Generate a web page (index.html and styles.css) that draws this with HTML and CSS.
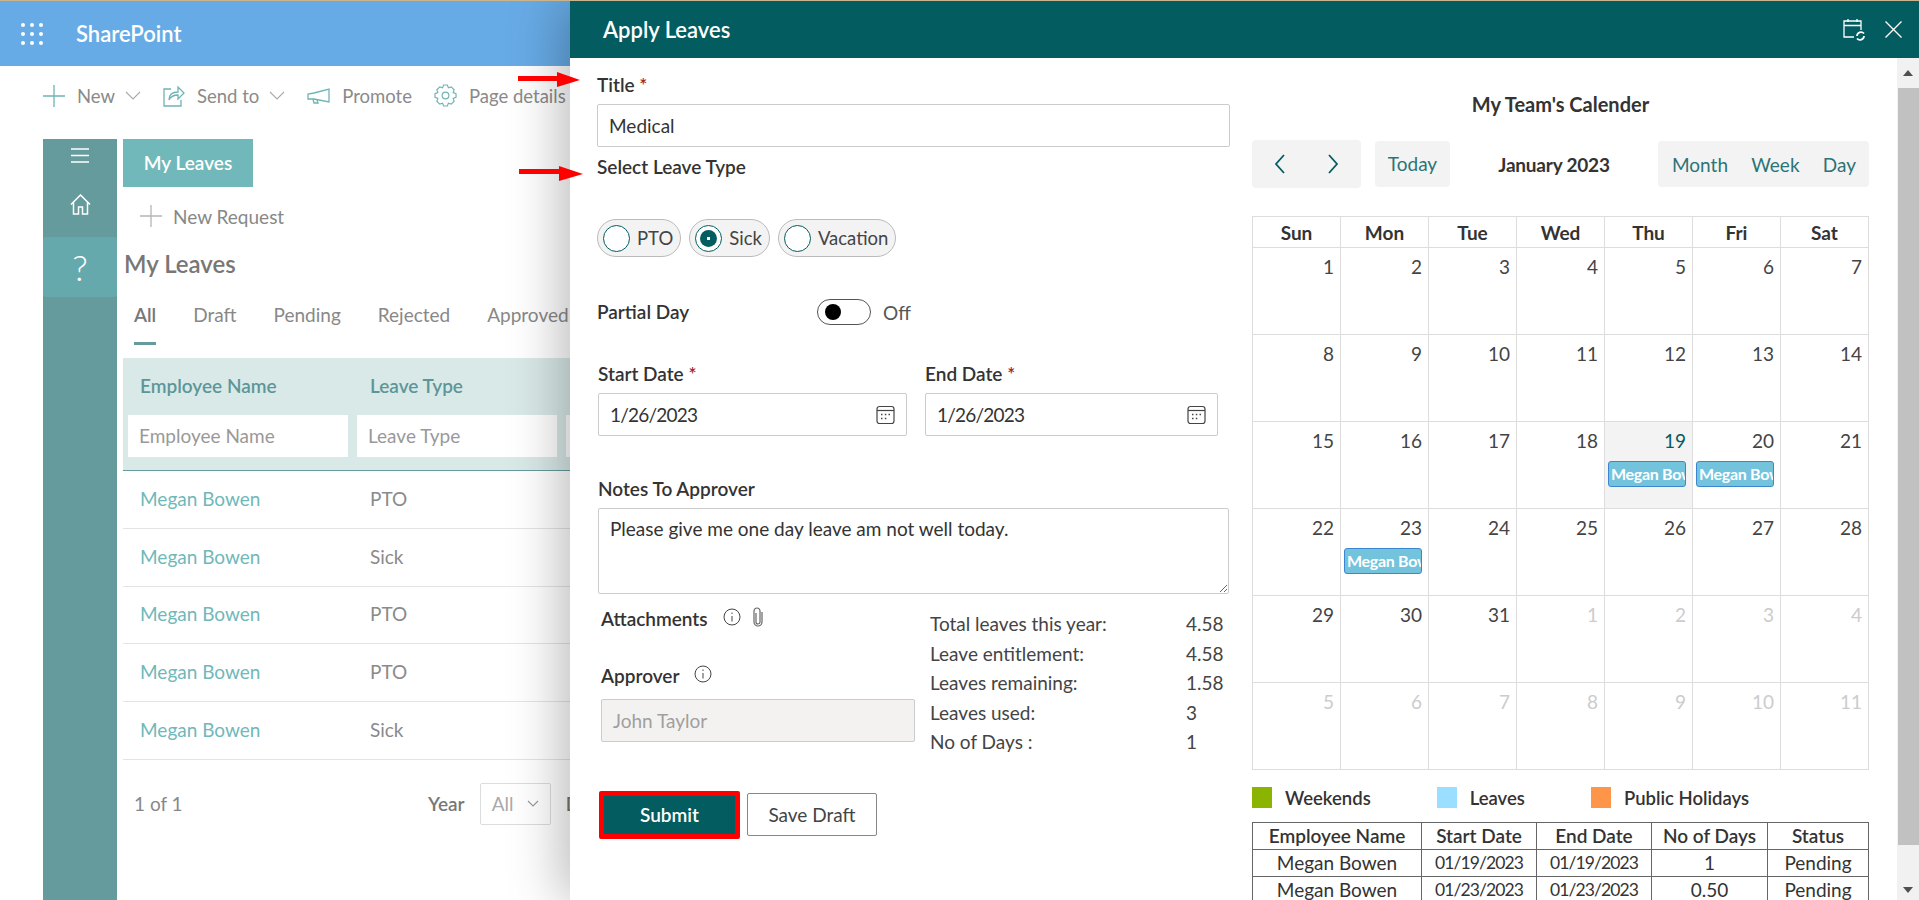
FILE: index.html
```html
<!DOCTYPE html>
<html lang="en">
<head>
  <meta charset="UTF-8">
  <title>Apply Leaves</title>
  <link rel="stylesheet" href="styles.css">
</head>

<body>
  <!-- sharepoint page behind the panel -->
  <header class="suite-bar">
    <svg class="waffle" width="22" height="22" viewBox="0 0 22 22" fill="#fff">
      <circle cx="2" cy="2" r="2"/><circle cx="11" cy="2" r="2"/><circle cx="20" cy="2" r="2"/>
      <circle cx="2" cy="11" r="2"/><circle cx="11" cy="11" r="2"/><circle cx="20" cy="11" r="2"/>
      <circle cx="2" cy="20" r="2"/><circle cx="11" cy="20" r="2"/><circle cx="20" cy="20" r="2"/>
    </svg>
    <span class="suite-name">SharePoint</span>
  </header>

  <div class="command-bar">
    <svg class="cmd-icon" width="22" height="22" viewBox="0 0 22 22" fill="none" stroke="#6fb3b5" stroke-width="1.3"><path d="M11 0v22M0 11h22"/></svg>
    <span class="cmd-text">New</span>
    <svg class="cmd-chevron" width="16" height="9" viewBox="0 0 16 9" fill="none" stroke="#aaa" stroke-width="1.1"><path d="M1 1l7 7 7-7"/></svg>
    <svg class="cmd-icon cmd-gap" width="22" height="22" viewBox="0 0 22 22" fill="none" stroke="#6fb3b5" stroke-width="1.3"><path d="M8 4H1v17h17v-6"/><path d="M6 15c0-6 4-8 9-8V2l6 6-6 6V10c-4 0-7 1-9 5z"/></svg>
    <span class="cmd-text">Send to</span>
    <svg class="cmd-chevron" width="16" height="9" viewBox="0 0 16 9" fill="none" stroke="#aaa" stroke-width="1.1"><path d="M1 1l7 7 7-7"/></svg>
    <svg class="cmd-icon cmd-gap" width="23" height="16" viewBox="0 0 23 16" fill="none" stroke="#6fb3b5" stroke-width="1.3"><path d="M22 1v13L7 11H1V6l6-1z"/><path d="M6 11l1 4h4l-1-3"/></svg>
    <span class="cmd-text">Promote</span>
    <svg class="cmd-icon cmd-gap" width="23" height="23" viewBox="0 0 24 24" fill="none" stroke="#6fb3b5" stroke-width="1.2"><circle cx="12" cy="12" r="3.5"/><path d="M10 1h4l1 3 3-1 3 3-1 3 3 1v4l-3 1 1 3-3 3-3-1-1 3h-4l-1-3-3 1-3-3 1-3-3-1v-4l3-1-1-3 3-3 3 1z"/></svg>
    <span class="cmd-text">Page details</span>
  </div>

  <div class="app">
    <nav class="rail">
      <div class="rail-item rail-menu">
        <svg width="18" height="15" viewBox="0 0 18 15" stroke="#fff" stroke-width="1.3"><path d="M0 1h18M0 7.5h18M0 14h18"/></svg>
      </div>
      <div class="rail-item rail-home">
        <svg width="21" height="21" viewBox="0 0 21 21" fill="none" stroke="#fff" stroke-width="1.5"><path d="M1 10.500L10.500 1 20 10.500M3.500 8.500V20h5v-7h4v7h5V8.500"/></svg>
      </div>
      <div class="rail-item rail-help">?</div>
    </nav>

    <main class="content">
      <div class="tab-title">My Leaves</div>
      <div class="new-request">
        <svg width="22" height="22" viewBox="0 0 22 22" fill="none" stroke="#b5b5b5" stroke-width="1.300"><path d="M11 0v22M0 11h22"/></svg>
        <span>New Request</span>
      </div>
      <h2 class="list-title">My Leaves</h2>
      <div class="filters">
        <span class="filter filter-active">All</span>
        <span class="filter">Draft</span>
        <span class="filter">Pending</span>
        <span class="filter">Rejected</span>
        <span class="filter">Approved</span>
      </div>

      <div class="list-head">
        <div class="head-labels">
          <span class="head-name">Employee Name</span>
          <span>Leave Type</span>
        </div>
        <div class="head-inputs">
          <div class="head-input head-input-name">Employee Name</div>
          <div class="head-input head-input-type">Leave Type</div>
          <div class="head-input"></div>
        </div>
      </div>

      <div class="list-row"><span class="row-name">Megan Bowen</span><span class="row-type">PTO</span></div>
      <div class="list-row"><span class="row-name">Megan Bowen</span><span class="row-type">Sick</span></div>
      <div class="list-row"><span class="row-name">Megan Bowen</span><span class="row-type">PTO</span></div>
      <div class="list-row"><span class="row-name">Megan Bowen</span><span class="row-type">PTO</span></div>
      <div class="list-row"><span class="row-name">Megan Bowen</span><span class="row-type">Sick</span></div>

      <div class="list-foot">
        <span class="page-count">1 of 1</span>
        <span class="year-label">Year</span>
        <div class="year-select">
          <span>All</span>
          <svg width="12" height="7" viewBox="0 0 12 7" fill="none" stroke="#999" stroke-width="1.100"><path d="M1 1l5 5 5-5"/></svg>
        </div>
        <span class="year-label">Date</span>
      </div>
    </main>
  </div>

  <!-- side panel -->
  <aside class="panel">
    <div class="panel-head">
      <span class="panel-title">Apply Leaves</span>
      <svg class="head-cal" width="23" height="23" viewBox="0 0 23 23" fill="none" stroke="#fff" stroke-width="1.300">
        <path d="M11 19H1V3h17v9M1 7.500h17M5 1v3M14 1v3"/>
        <path d="M14 18a4 4 0 0 1 7-2.500M21 18a4 4 0 0 1-7 2.500" stroke-width="1.800"/>
      </svg>
      <svg class="head-close" width="17" height="17" viewBox="0 0 17 17" stroke="#fff" stroke-width="1.300"><path d="M.5.5l16 16M16.500.5l-16 16"/></svg>
    </div>

    <div class="panel-body">
      <section class="form-col">
        <label class="label">Title <span class="req">*</span></label>
        <input class="input input-title" value="Medical">

        <label class="label label-type">Select Leave Type</label>
        <div class="radios">
          <div class="pill"><span class="radio"></span>PTO</div>
          <div class="pill"><span class="radio radio-on"></span>Sick</div>
          <div class="pill"><span class="radio"></span>Vacation</div>
        </div>

        <div class="partial">
          <label class="label partial-label">Partial Day</label>
          <span class="toggle"><span class="toggle-dot"></span></span>
          <span class="toggle-text">Off</span>
        </div>

        <div class="dates">
          <div class="date-field date-start">
            <label class="label">Start Date <span class="req">*</span></label>
            <div class="input date-input">1/26/2023
              <svg width="19" height="20" viewBox="0 0 19 20" fill="none" stroke="#444" stroke-width="1.200"><rect x="1" y="1.500" width="17" height="17" rx="2.500"/><path d="M1 5.500h17"/><path d="M5 9.500h1.500M8.800 9.500h1.500M12.500 9.500h1.500M5 13.500h1.500M8.800 13.500h1.500" stroke-width="1.600"/></svg>
            </div>
          </div>
          <div class="date-field date-end">
            <label class="label">End Date <span class="req">*</span></label>
            <div class="input date-input">1/26/2023
              <svg width="19" height="20" viewBox="0 0 19 20" fill="none" stroke="#444" stroke-width="1.200"><rect x="1" y="1.500" width="17" height="17" rx="2.500"/><path d="M1 5.500h17"/><path d="M5 9.500h1.500M8.800 9.500h1.500M12.500 9.500h1.500M5 13.500h1.500M8.800 13.500h1.500" stroke-width="1.600"/></svg>
            </div>
          </div>
        </div>

        <label class="label label-notes">Notes To Approver</label>
        <textarea class="notes">Please give me one day leave am not well today.</textarea>

        <div class="lower">
          <div class="lower-left">
            <div class="attach">
              <label class="label">Attachments</label>
              <svg class="info" width="18" height="18" viewBox="0 0 18 18" fill="none" stroke="#444" stroke-width="1"><circle cx="9" cy="9" r="8"/><path d="M9 8v5.500M9 4.500v1.500"/></svg>
              <svg class="clip" width="10" height="20" viewBox="0 0 10 20" fill="none" stroke="#666" stroke-width="1.200"><path d="M3 6v9a2 2 0 0 0 4 0V4a3 3 0 0 0-6 0v11a4 4 0 0 0 8 0V5"/></svg>
            </div>
            <div class="approver">
              <label class="label">Approver</label>
              <svg class="info" width="18" height="18" viewBox="0 0 18 18" fill="none" stroke="#444" stroke-width="1"><circle cx="9" cy="9" r="8"/><path d="M9 8v5.500M9 4.500v1.500"/></svg>
            </div>
            <div class="input input-approver">John Taylor</div>
          </div>
          <div class="stats">
            <span>Total leaves this year:</span><span>4.58</span>
            <span>Leave entitlement:</span><span>4.58</span>
            <span>Leaves remaining:</span><span>1.58</span>
            <span>Leaves used:</span><span>3</span>
            <span>No of Days :</span><span>1</span>
          </div>
        </div>

        <div class="actions">
          <button class="btn-submit">Submit</button>
          <button class="btn-draft">Save Draft</button>
        </div>
      </section>

      <section class="cal-col">
        <div class="cal-title">My Team's Calender</div>
        <div class="cal-toolbar">
          <div class="cal-nav">
            <svg width="11" height="20" viewBox="0 0 11 20" fill="none" stroke="#035c60" stroke-width="1.800"><path d="M10 1L2 10l8 9"/></svg>
            <svg width="11" height="20" viewBox="0 0 11 20" fill="none" stroke="#035c60" stroke-width="1.800"><path d="M1 1l8 9-8 9"/></svg>
          </div>
          <div class="cal-today">Today</div>
          <div class="cal-month">January 2023</div>
          <div class="cal-views"><span>Month</span><span>Week</span><span>Day</span></div>
        </div>

        <table class="cal">
          <thead>
            <tr><th>Sun</th><th>Mon</th><th>Tue</th><th>Wed</th><th>Thu</th><th>Fri</th><th>Sat</th></tr>
          </thead>
          <tbody>
            <tr><td>1</td><td>2</td><td>3</td><td>4</td><td>5</td><td>6</td><td>7</td></tr>
            <tr><td>8</td><td>9</td><td>10</td><td>11</td><td>12</td><td>13</td><td>14</td></tr>
            <tr>
              <td>15</td><td>16</td><td>17</td><td>18</td>
              <td class="today">19<div class="event">Megan Bowen</div></td>
              <td>20<div class="event">Megan Bowen</div></td>
              <td>21</td>
            </tr>
            <tr>
              <td>22</td>
              <td>23<div class="event">Megan Bowen</div></td>
              <td>24</td><td>25</td><td>26</td><td>27</td><td>28</td>
            </tr>
            <tr><td>29</td><td>30</td><td>31</td><td class="other">1</td><td class="other">2</td><td class="other">3</td><td class="other">4</td></tr>
            <tr><td class="other">5</td><td class="other">6</td><td class="other">7</td><td class="other">8</td><td class="other">9</td><td class="other">10</td><td class="other">11</td></tr>
          </tbody>
        </table>

        <div class="legend">
          <div class="legend-item"><span class="swatch swatch-weekend"></span>Weekends</div>
          <div class="legend-item"><span class="swatch swatch-leave"></span>Leaves</div>
          <div class="legend-item"><span class="swatch swatch-holiday"></span>Public Holidays</div>
        </div>

        <table class="summary">
          <thead>
            <tr><th>Employee Name</th><th>Start Date</th><th>End Date</th><th>No of Days</th><th>Status</th></tr>
          </thead>
          <tbody>
            <tr><td>Megan Bowen</td><td>01/19/2023</td><td>01/19/2023</td><td>1</td><td>Pending</td></tr>
            <tr><td>Megan Bowen</td><td>01/23/2023</td><td>01/23/2023</td><td>0.50</td><td>Pending</td></tr>
          </tbody>
        </table>
      </section>

      <div class="scrollbar">
        <div class="scroll-btn"><span class="arrow-up"></span></div>
        <div class="scroll-thumb"></div>
        <div class="scroll-btn scroll-btn-down"><span class="arrow-down"></span></div>
      </div>
    </div>
  </aside>

  <!-- red callout arrows drawn over the screenshot -->
  <svg class="callout callout-title" width="62" height="15" viewBox="0 0 62 15" fill="#f00"><path d="M0 4l39 0V0l23 8-23 7V9L0 9z"/></svg>
  <svg class="callout callout-type" width="64" height="15" viewBox="0 0 64 15" fill="#f00"><path d="M0 3l40 0V0l24 8-24 7V8L0 8z"/></svg>
</body>

</html>
```
FILE: styles.css
```css
* {
  box-sizing: border-box;
}

body {
  margin: 0;
  width: 1919px;
  height: 900px;
  position: relative;
  overflow: hidden;
  background-color: #fff;
  border-top: 1px solid #c9b48e;
  font-family: 'Lato', sans-serif;
  font-size: 19px;
  color: #333;
}

/* page behind the panel */
.suite-bar {
  height: 65px;
  background-color: #67abe6;
  display: flex;
  align-items: center;
  padding-left: 21px;
  color: #fff;
}

.suite-name {
  margin-left: 33px;
  font-size: 22px;
  font-weight: 600;
}

.command-bar {
  height: 73px;
  padding: 0 0 14px 43px;
  display: flex;
  align-items: center;
  color: #8a8a8a;
}

.cmd-text {
  margin-left: 12px;
  font-size: 18.500px;
  white-space: nowrap;
}

.cmd-chevron {
  margin-left: 10px;
}

.cmd-gap {
  margin-left: 22px;
}

.app {
  height: 761px;
  padding-left: 43px;
  display: flex;
}

.rail {
  width: 74px;
  background-color: #669b9d;
  flex-shrink: 0;
}

.rail-item {
  display: flex;
  justify-content: center;
  align-items: center;
  color: #fff;
}

.rail-menu {
  height: 32px;
}

.rail-home {
  height: 66px;
}

.rail-help {
  height: 60px;
  background-color: #66a9ad;
  border-radius: 3px;
  font-size: 36px;
  font-weight: 300;
}

.content {
  margin-left: 6px;
  width: 600px;
  color: #888;
}

.tab-title {
  width: 130px;
  height: 48px;
  line-height: 48px;
  text-align: center;
  background-color: #70b8b9;
  color: #fff;
  font-size: 19px;
  font-weight: 600;
}

.new-request {
  height: 58px;
  padding-left: 17px;
  display: flex;
  align-items: center;
  gap: 11px;
  font-size: 19px;
}

.list-title {
  margin: 2px 0 0;
  padding-left: 1px;
  height: 34px;
  line-height: 34px;
  font-size: 24px;
  font-weight: 600;
  color: #777;
}

.filters {
  height: 77px;
  padding: 22px 0 0 11px;
  display: flex;
  gap: 37px;
  font-size: 19px;
}

.filter-active {
  font-weight: 600;
  color: #777;
  height: 42px;
  border-bottom: 3px solid #669b9d;
}

.list-head {
  height: 113px;
  border-bottom: 1px solid #669b9d;
  background-color: #d9e9e8;
  color: #5d9698;
  font-weight: 600;
}

.head-labels {
  display: flex;
  height: 57px;
  padding: 16px 0 0 17px;
  font-size: 19px;
}

.head-name {
  width: 230px;
}

.head-inputs {
  display: flex;
  padding-left: 5px;
  gap: 9px;
}

.head-input {
  width: 100px;
  height: 42px;
  line-height: 42px;
  padding-left: 11px;
  background-color: #fff;
  color: #999;
  font-weight: 400;
  font-size: 19px;
  flex-shrink: 0;
}

.head-input-name {
  width: 220px;
}

.head-input-type {
  width: 200px;
}

.list-row {
  height: 57.800px;
  border-bottom: 1px solid #e4e4e4;
  display: flex;
  align-items: center;
  padding: 0 0 2px 17px;
  font-size: 19px;
}

.row-name {
  width: 230px;
  color: #70b8b9;
}

.row-type {
  color: #8a8a8a;
}

.list-foot {
  display: flex;
  align-items: center;
  padding: 23px 0 0 11px;
  font-size: 19px;
}

.page-count {
  width: 294px;
}

.year-label {
  font-weight: 600;
  color: #777;
}

.year-select {
  margin: 0 15px;
  width: 71px;
  height: 42px;
  border: 1px solid #ddd;
  border-radius: 2px;
  display: flex;
  align-items: center;
  justify-content: space-between;
  padding: 0 11px;
  color: #aaa;
}

/* side panel */
.panel {
  position: absolute;
  top: 0;
  left: 570px;
  right: 0;
  bottom: 0;
  background-color: #fff;
  box-shadow: -8px 0 50px rgba(0, 0, 0, 0.28);
}

.panel-head {
  height: 57px;
  background-color: #035c60;
  color: #fff;
  display: flex;
  align-items: center;
  padding-left: 33px;
}

.panel-title {
  font-size: 22px;
  font-weight: 600;
  flex: 1;
}

.head-cal {
  margin-right: 19px;
}

.head-close {
  margin-right: 17px;
}

.panel-body {
  height: 842px;
  display: flex;
  overflow: hidden;
}

.form-col {
  width: 682px;
  padding: 16px 0 0 27px;
  flex-shrink: 0;
}

.label {
  display: block;
  height: 22px;
  line-height: 22px;
  font-size: 19px;
  font-weight: 600;
  color: #333;
  white-space: nowrap;
}

.req {
  color: #a4262c;
}

.input {
  display: block;
  height: 43px;
  margin-top: 8px;
  padding: 0 11px;
  border: 1px solid #ccc;
  border-radius: 2px;
  font-family: inherit;
  font-size: 19px;
  color: #333;
  line-height: 41px;
}

.input-title {
  width: 633px;
}

.label-type {
  margin-top: 9px;
}

.radios {
  margin-top: 41px;
  display: flex;
  gap: 8px;
}

.pill {
  height: 38px;
  padding: 0 7px 0 5px;
  border: 1px solid #bbb;
  border-radius: 19px;
  background-color: #f3f3f3;
  display: flex;
  align-items: center;
  gap: 7px;
  font-size: 18.500px;
  color: #444;
}

.radio {
  width: 27px;
  height: 27px;
  border: 1px solid #035c60;
  border-radius: 50%;
  background-color: #fff;
  display: flex;
  align-items: center;
  justify-content: center;
}

.radio-on::after {
  content: "";
  width: 17px;
  height: 17px;
  border-radius: 50%;
  background: radial-gradient(circle, #fff 0 1.500px, #035c60 2px);
}

.partial {
  margin-top: 42px;
  height: 26px;
  display: flex;
  align-items: center;
}

.partial-label {
  width: 220px;
}

.toggle {
  width: 54px;
  height: 26px;
  border: 1px solid #555;
  border-radius: 13px;
  display: flex;
  align-items: center;
  padding-left: 7px;
}

.toggle-dot {
  width: 16px;
  height: 16px;
  border-radius: 50%;
  background-color: #000;
}

.toggle-text {
  margin-left: 12px;
  font-size: 19px;
  color: #555;
}

.dates {
  margin-top: 38px;
  padding-left: 1px;
  display: flex;
  gap: 18px;
}

.date-start {
  width: 309px;
}

.date-end {
  width: 293px;
}

.date-input {
  display: flex;
  align-items: center;
  justify-content: space-between;
  padding-right: 11px;
  padding-left: 11px;
  letter-spacing: -0.8px;
}

.label-notes {
  margin-top: 42px;
  margin-left: 1px;
}

.notes {
  display: block;
  margin: 8px 0 0 1px;
  width: 631px;
  height: 86px;
  padding: 8px 11px;
  border: 1px solid #ccc;
  border-radius: 2px;
  font-family: inherit;
  font-size: 19px;
  color: #333;
}

.lower {
  display: flex;
  padding-left: 4px;
}

.lower-left {
  width: 329px;
  padding-top: 14px;
}

.attach,
.approver {
  display: flex;
  align-items: center;
}

.info {
  margin-left: 15px;
  margin-top: -5px;
}

.clip {
  margin-left: 12px;
  margin-top: -5px;
}

.approver {
  margin-top: 35px;
}

.input-approver {
  width: 314px;
  margin-top: 12px;
  background-color: #f3f2f1;
  color: #a19f9d;
}

.stats {
  padding-top: 15px;
  display: grid;
  grid-template-columns: 256px 44px;
  grid-auto-rows: 29.500px;
  align-items: center;
  font-size: 19px;
  color: #444;
}

.actions {
  margin-top: 34px;
  margin-left: 2px;
  display: flex;
  align-items: center;
  gap: 7px;
}

.btn-submit {
  width: 141px;
  height: 48px;
  border: 5px solid #f00;
  border-radius: 2px;
  background-color: #035c60;
  color: #fff;
  font-family: inherit;
  font-size: 19px;
  font-weight: 600;
}

.btn-draft {
  width: 130px;
  height: 43px;
  border: 1px solid #8a8886;
  border-radius: 2px;
  background-color: #fff;
  color: #444;
  font-family: inherit;
  font-size: 19px;
}

/* calendar */
.cal-col {
  width: 617px;
  padding-top: 35px;
  flex-shrink: 0;
}

.cal-title {
  height: 22px;
  line-height: 22px;
  text-align: center;
  font-size: 20px;
  font-weight: 700;
  color: #333;
}

.cal-toolbar {
  margin-top: 25px;
  height: 48px;
  display: flex;
  align-items: center;
}

.cal-nav {
  width: 109px;
  height: 48px;
  padding: 0 22px;
  background-color: #f3f3f3;
  border-radius: 4px;
  display: flex;
  align-items: center;
  justify-content: space-between;
}

.cal-today {
  margin-left: 14px;
  width: 75px;
  height: 46px;
  line-height: 46px;
  text-align: center;
  background-color: #f3f3f3;
  border-radius: 4px;
  color: #2b7376;
  font-size: 19px;
}

.cal-month {
  flex: 1;
  text-align: center;
  font-weight: 700;
  font-size: 19px;
  letter-spacing: -0.2px;
}

.cal-views {
  width: 211px;
  height: 46px;
  padding: 0 13px 0 14px;
  background-color: #f3f3f3;
  border-radius: 4px;
  display: flex;
  align-items: center;
  justify-content: space-between;
  color: #2b7376;
  font-size: 19px;
}

.cal {
  margin-top: 28px;
  width: 617px;
  table-layout: fixed;
  border-collapse: collapse;
}

.cal th,
.cal td {
  border: 1px solid #ddd;
}

.cal th {
  height: 31px;
  padding: 0;
  font-size: 19px;
  font-weight: 700;
  color: #333;
}

.cal td {
  height: 87px;
  padding: 7px 6px 0 3px;
  text-align: right;
  vertical-align: top;
  font-size: 19px;
  line-height: 24px;
  color: #444;
}

.cal td.today {
  background-color: #f3f3f3;
  color: #035c60;
}

.cal td.other {
  color: #ccc;
}

.event {
  margin-top: 8px;
  height: 26px;
  line-height: 24px;
  padding-left: 2px;
  text-align: left;
  overflow: hidden;
  white-space: nowrap;
  background-color: #73c3dd;
  border: 1px solid #3a87d0;
  border-radius: 3px;
  color: #fff;
  font-size: 16px;
  font-weight: 700;
  letter-spacing: -0.3px;
}

.legend {
  margin-top: 17px;
  display: flex;
  gap: 66px;
}

.legend-item {
  height: 21px;
  display: flex;
  align-items: center;
  font-size: 18.500px;
  font-weight: 600;
  color: #333;
}

.swatch {
  width: 20px;
  height: 21px;
  margin-right: 13px;
}

.swatch-weekend {
  background-color: #8ab400;
}

.swatch-leave {
  background-color: #9adfff;
}

.swatch-holiday {
  background-color: #ff9548;
}

.summary {
  margin-top: 14px;
  width: 617px;
  table-layout: fixed;
  border-collapse: collapse;
  font-size: 19px;
}

.summary th,
.summary td {
  height: 27px;
  padding: 0;
  border: 1px solid #666;
  text-align: center;
  color: #333;
  line-height: 22px;
}

.summary th {
  font-weight: 600;
}

.summary td:nth-child(2),
.summary td:nth-child(3) {
  font-size: 17.500px;
  letter-spacing: -0.9px;
}

.summary th:nth-child(1) {
  width: 169px;
}

.summary th:nth-child(2) {
  width: 115px;
}

.summary th:nth-child(3) {
  width: 115px;
}

.summary th:nth-child(4) {
  width: 116px;
}

/* the panel's scrollbar */
.scrollbar {
  margin-left: 28px;
  width: 22px;
  display: flex;
  flex-direction: column;
  background-color: #f1f1f1;
}

.scroll-btn {
  height: 30px;
  display: flex;
  justify-content: center;
  align-items: center;
}

.scroll-btn-down {
  height: 55px;
  align-items: flex-end;
  padding-bottom: 7px;
}

.scroll-thumb {
  flex: 1;
  margin-left: 1px;
  background-color: #c1c1c1;
}

.arrow-up,
.arrow-down {
  width: 0;
  height: 0;
  border-left: 5px solid transparent;
  border-right: 5px solid transparent;
}

.arrow-up {
  border-bottom: 6px solid #505050;
}

.arrow-down {
  border-top: 6px solid #505050;
}

/* callout arrows */
.callout {
  position: absolute;
}

.callout-title {
  left: 518px;
  top: 71px;
}

.callout-type {
  left: 519px;
  top: 165px;
}
```
